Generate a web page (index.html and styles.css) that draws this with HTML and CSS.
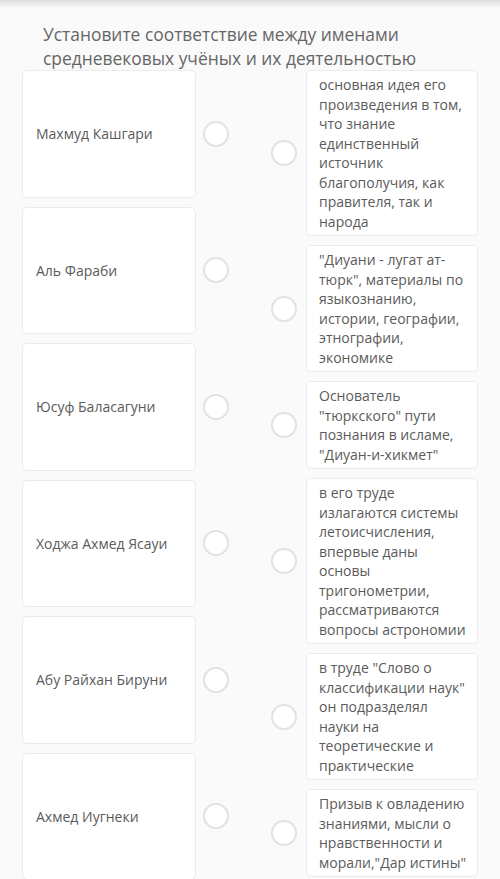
FILE: index.html
```html
<!DOCTYPE html>
<html lang="ru">
<head>
<meta charset="utf-8">
<link rel="stylesheet" href="styles.css">
</head>
<body>
<div class="topbar"></div>
<main class="page">
  <h1 class="title">Установите соответствие между именами средневековых учёных и их деятельностью</h1>
  <div class="match">
    <div class="col col-left">
      <div class="row"><div class="card name">Махмуд Кашгари</div><span class="radio"></span></div>
      <div class="row"><div class="card name">Аль Фараби</div><span class="radio"></span></div>
      <div class="row"><div class="card name">Юсуф Баласагуни</div><span class="radio"></span></div>
      <div class="row"><div class="card name">Ходжа Ахмед Ясауи</div><span class="radio"></span></div>
      <div class="row"><div class="card name">Абу Райхан Бируни</div><span class="radio"></span></div>
      <div class="row"><div class="card name">Ахмед Иугнеки</div><span class="radio"></span></div>
    </div>
    <div class="col col-right">
      <div class="row"><span class="radio"></span><div class="card desc">основная идея его произведения в том, что знание единственный источник благополучия, как правителя, так и народа</div></div>
      <div class="row"><span class="radio"></span><div class="card desc">"Диуани - лугат ат-тюрк", материалы по языкознанию, истории, географии, этнографии, экономике</div></div>
      <div class="row"><span class="radio"></span><div class="card desc">Основатель "тюркского" пути познания в исламе, "Диуан-и-хикмет"</div></div>
      <div class="row"><span class="radio"></span><div class="card desc">в его труде излагаются системы летоисчисления, впервые даны основы тригонометрии, рассматриваются вопросы астрономии</div></div>
      <div class="row"><span class="radio"></span><div class="card desc">в труде "Слово о классификации наук" он подразделял науки на теоретические и практические</div></div>
      <div class="row"><span class="radio"></span><div class="card desc">Призыв к овладению знаниями, мысли о нравственности и морали,"Дар истины"</div></div>
    </div>
  </div>
</main>
</body>
</html>
```
FILE: styles.css
```css
html, body {
  margin: 0;
  padding: 0;
  background: #fafafa;
  font-family: "Open Sans", "Noto Sans", sans-serif;
  color: #5b5b5b;
  overflow: hidden;
}
.topbar {
  height: 7px;
  background: linear-gradient(#dcdcdc, #f4f4f4);
}
.page {
  padding: 0 22px;
}
.title {
  margin: 15px 0 0 21px;
  font-size: 17.4px;
  font-weight: 400;
  line-height: 24px;
  color: #666;
}
.match {
  display: grid;
  grid-template-columns: 207px 207px;
  justify-content: space-between;
}
.col {
  display: flex;
  flex-direction: column;
  gap: 9px;
}
.col-left .row {
  height: 127.5px;
}
.row {
  display: flex;
  align-items: center;
}
.card {
  background: #fff;
  border: 1px solid #ebebeb;
  border-radius: 5px;
  box-sizing: border-box;
  font-size: 14px;
  line-height: 19.5px;
  color: #5b5b5b;
}
.name {
  width: 174px;
  height: 100%;
  display: flex;
  align-items: center;
  padding: 0 13px;
}
.desc {
  width: 172px;
  padding: 4px 8px 4px 12px;
  margin-left: 9px;
}
.col-left .radio {
  margin-left: 7px;
}
.radio {
  width: 26px;
  height: 26px;
  box-sizing: border-box;
  border: 2px solid #e2e2e2;
  border-radius: 50%;
  background: #fff;
  flex: none;
}
```
